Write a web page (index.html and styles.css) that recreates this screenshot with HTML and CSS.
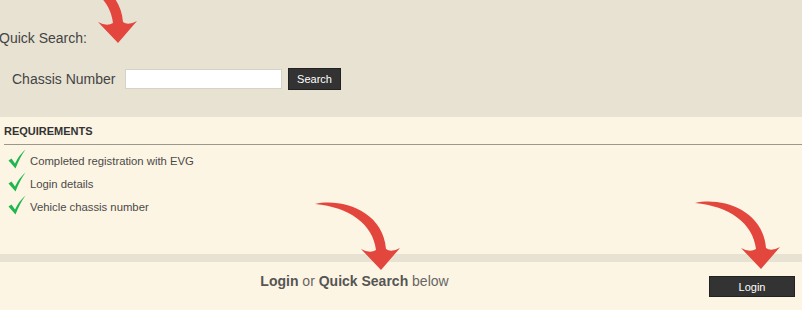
FILE: index.html
```html
<!DOCTYPE html>
<html>
<head>
    <meta charset="UTF-8">
    <meta name="viewport" content="width=device-width, initial-scale=1.0">
    <title>Quick Search</title>
    <link rel="stylesheet" href="styles.css">
</head>
<body>
    <div class="page">
        <div class="quick-search">
            <div class="quick-title">Quick Search:</div>
            <div class="chassis-row">
                <label for="chassis">Chassis Number</label>
                <input type="text" id="chassis">
                <button class="btn btn-search">Search</button>
            </div>
        </div>

        <div class="requirements">
            <h3>REQUIREMENTS</h3>
            <ul>
                <li>
                    <svg class="check" viewBox="0 0 18 20"><path d="M0.5 11.5 L3.5 9.5 L7 14.5 Q11 6 17.5 0.5 Q12 8 7.5 19.5 Z"/></svg>
                    Completed registration with EVG
                </li>
                <li>
                    <svg class="check" viewBox="0 0 18 20"><path d="M0.5 11.5 L3.5 9.5 L7 14.5 Q11 6 17.5 0.5 Q12 8 7.5 19.5 Z"/></svg>
                    Login details
                </li>
                <li>
                    <svg class="check" viewBox="0 0 18 20"><path d="M0.5 11.5 L3.5 9.5 L7 14.5 Q11 6 17.5 0.5 Q12 8 7.5 19.5 Z"/></svg>
                    Vehicle chassis number
                </li>
            </ul>
        </div>

        <div class="band"></div>

        <div class="footer">
            <div class="footer-text"><b>Login</b> or <b>Quick Search</b> below</div>
            <button class="btn btn-login">Login</button>
        </div>

        <!-- pointer arrows drawn over the page -->
        <svg class="arrow arrow-top" viewBox="0 0 86 72"><path d="M1 5 C28 -1 69 12 72 50 Q77 54 86 49 L67 71 L47 50 Q56 55 62 51 C59 25 35 8 1 5 Z"/></svg>
        <svg class="arrow arrow-mid" viewBox="0 0 86 72"><path d="M1 5 C28 -1 69 12 72 50 Q77 54 86 49 L67 71 L47 50 Q56 55 62 51 C59 25 35 8 1 5 Z"/></svg>
        <svg class="arrow arrow-right" viewBox="0 0 86 72"><path d="M1 5 C28 -1 69 12 72 50 Q77 54 86 49 L67 71 L47 50 Q56 55 62 51 C59 25 35 8 1 5 Z"/></svg>
    </div>
</body>
</html>
```

FILE: styles.css
```css
:root {
    --top-bg: #e8e2d3;
    --page-bg: #fdf5e3;
    --text: #444;
    --dark: #333;
    --arrow: #e2463c;
    --check: #1fb650;
}

body {
    margin: 0;
    font-family: 'Liberation Sans', Arial, sans-serif;
    color: var(--text);
    background: var(--page-bg);
    overflow: hidden;
}

.page {
    position: relative;
    width: 802px;
    height: 310px;
    overflow: hidden;
}

.quick-search {
    background: var(--top-bg);
    height: 117px;
    box-sizing: border-box;
    padding-top: 29px;
}

.quick-title {
    font-size: 14px;
    line-height: 18px;
    margin-left: -1px;
}

.chassis-row {
    display: flex;
    align-items: center;
    margin-top: 21px;
    padding-left: 12px;
    height: 22px;
}

.chassis-row label {
    font-size: 14px;
    width: 113px;
}

.chassis-row input {
    width: 157px;
    height: 20px;
    box-sizing: border-box;
    border: 1px solid #d6d2c8;
    background: #fff;
    margin: 0;
    padding: 0 4px;
}

.btn {
    border: 1px solid #222;
    background: var(--dark);
    color: #fff;
    font-family: 'Liberation Sans', Arial, sans-serif;
    padding: 0;
    cursor: pointer;
}

.btn-search {
    margin-left: 6px;
    width: 53px;
    height: 22px;
    font-size: 11px;
}

.requirements {
    height: 137px;
    box-sizing: border-box;
    padding-left: 4px;
}

.requirements h3 {
    margin: 0;
    padding: 7px 0 6px;
    font-size: 11px;
    line-height: 14px;
    color: #333;
    border-bottom: 1px solid #9c978d;
}

.requirements ul {
    list-style: none;
    margin: 0;
    padding: 5px 0 0 4px;
}

.requirements li {
    display: flex;
    align-items: center;
    font-size: 11.3px;
    line-height: 23px;
    color: #4a4a4a;
}

.check {
    width: 18px;
    height: 20px;
    margin-right: 4px;
    margin-top: -6px;
    fill: var(--check);
}

.band {
    height: 8px;
    background: var(--top-bg);
}

.footer {
    display: flex;
    align-items: flex-start;
}

.footer-text {
    flex: 1;
    text-align: center;
    padding-top: 10px;
    font-size: 14px;
    line-height: 18px;
    color: #666;
}

.footer-text b {
    color: #555;
}

.btn-login {
    margin-top: 14px;
    margin-right: 7px;
    width: 86px;
    height: 21px;
    font-size: 11px;
}

.arrow {
    position: absolute;
    width: 86px;
    height: 72px;
    fill: var(--arrow);
}

.arrow-top {
    left: 51px;
    top: -28px;
}

.arrow-mid {
    left: 314px;
    top: 199px;
}

.arrow-right {
    left: 694px;
    top: 198px;
}
```
